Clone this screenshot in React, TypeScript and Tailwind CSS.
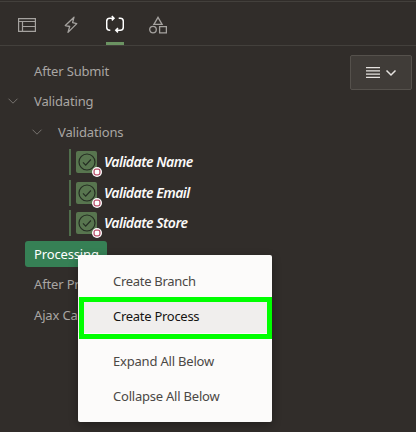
import React from "react";

const Chevron = ({ className }: { className: string }) => (
  <svg width="12" height="8" viewBox="0 0 12 8" fill="none" stroke="currentColor" className={className}>
    <path d="M1.5 1.7 6 6.2l4.5-4.5" />
  </svg>
);

const RegionIcon = () => (
  <svg width="18" height="14" viewBox="0 0 18 14" fill="none" stroke="currentColor" strokeWidth="1.2">
    <path d="M.6.6h16.8v12.8H.6zM.5 3.5h17M4.5 3.5v10M4.5 8.5h13" />
  </svg>
);

const BoltIcon = () => (
  <svg width="14" height="18" viewBox="0 0 14 18" fill="none" stroke="currentColor" strokeWidth="1.3" strokeLinejoin="round">
    <path d="M10 1.2 1.3 9.5l4.4 1L4 16.4l8.8-8.8-4.2-1z" />
  </svg>
);

const CycleIcon = () => (
  <svg width="18" height="18" viewBox="0 0 18 18" fill="none" stroke="currentColor" strokeWidth="1.5">
    <path d="M4.3 15.2h-.6c-2 0-3-1-3-3V6.2c0-2 1-3 3-3h4.6M5.8 1 8 3.2 5.8 5.4" />
    <path d="M12.7 3.2h1.6c2 0 3 1 3 3v6c0 2-1 3-3 3H9.8M12 13l-2.2 2.2L12 17.4" />
  </svg>
);

const ShapesIcon = () => (
  <svg width="18" height="18" viewBox="0 0 18 18" fill="none" stroke="currentColor" strokeWidth="1.3">
    <path d="M9 1.3 13.1 8.4H4.9zM10.6 10.6h6.8v6.2h-6.8z" />
    <circle cx="4" cy="13.6" r="3.3" />
  </svg>
);

const Validation = ({ label, spacing }: { label: string; spacing: string }) => (
  <div className="flex h-[30.5px] items-center pl-[69px]">
    <span className="h-[26px] w-[2px] bg-[#506e4c]" />
    <span className="relative ml-[5px] flex h-[22px] w-[21px] items-center justify-center rounded-[2px] bg-[#58754f]">
      <svg width="18" height="18" viewBox="0 0 18 18" fill="none" stroke="#252d23" strokeWidth="1.2">
        <circle cx="9" cy="9" r="8" />
        <path d="m5 9.3 2.7 2.8 5.2-5.6" />
      </svg>
      <svg className="absolute top-[16px] left-[16px]" width="10" height="10" viewBox="0 0 10 10">
        <circle cx="5" cy="5" r="5" fill="#fff" />
        <rect x="2.1" y="2.1" width="5.8" height="5.8" rx="1.8" fill="#fff" stroke="#b9526c" strokeWidth="1.3" />
      </svg>
    </span>
    <span className={`ml-[7px] text-[14px] font-semibold text-[#fbf9f8] italic ${spacing}`}>{label}</span>
  </div>
);

const MenuItem = ({ label, className }: { label: string; className: string }) => (
  <div className={`flex h-[35px] items-center pl-[35px] ${className}`}>{label}</div>
);

export default function App() {
  return (
    <div className="relative h-[432px] w-[416px] overflow-hidden bg-[#312d2a] font-['Noto_Sans','Open_Sans',sans-serif] text-[13px] leading-[18px] whitespace-nowrap text-[#a9a6a3]">
      <div className="h-px" />
      <header className="flex h-[45px] items-start border-y border-[#43403c] pl-[18px] text-[#a5a29f]">
        <div className="mt-[16px] w-[46px]"><RegionIcon /></div>
        <div className="mt-[14px] w-[42px]"><BoltIcon /></div>
        <div className="flex h-[43px] w-[43px] flex-col justify-between pt-[13px] text-white">
          <CycleIcon />
          <span className="h-[3px] w-[18px] bg-[#6b9362]" />
        </div>
        <div className="mt-[14px]"><ShapesIcon /></div>
      </header>
      <div className="flex justify-between">
        <div className="pt-[10px]">
          <div className="flex h-[30px] items-center pl-[34px] tracking-[-0.15px]">After Submit</div>
          <div className="flex h-[30.5px] items-center pl-[7px]">
            <Chevron className="mr-[15px] text-[#77736f]" />
            <span className="tracking-[-0.15px]">Validating</span>
          </div>
          <div className="flex h-[30.5px] items-center pl-[31px]">
            <Chevron className="mr-[15px] text-[#77736f]" />
            <span className="tracking-[-0.15px]">Validations</span>
          </div>
          <Validation label="Validate Name" spacing="tracking-[-0.5px]" />
          <Validation label="Validate Email" spacing="tracking-[-0.5px]" />
          <Validation label="Validate Store" spacing="tracking-[-0.5px]" />
          <div className="flex h-[30.5px] items-center pl-[25px]">
            <span className="flex h-[26px] w-[82px] items-center rounded-[3px] bg-[#368055] pl-[9px] tracking-[-0.15px] text-white">Processing</span>
          </div>
          <div className="flex h-[30.5px] items-center pl-[34px] tracking-[-0.15px]">After Processing</div>
          <div className="flex h-[30.5px] items-center pl-[34px] tracking-[-0.15px]">Ajax Callback</div>
        </div>
        <div className="mt-[9px] mr-[4px] flex h-[35px] w-[62px] items-center justify-center gap-[5px] rounded-[2px] border border-[#55514c] bg-[#403c38] text-[#e6e3e0]">
          <svg width="14" height="11" viewBox="0 0 14 11" stroke="currentColor" strokeWidth="1.25">
            <path d="M0 .6h14M0 3.9h14M0 7.1h14M0 10.4h14" />
          </svg>
          <svg width="12" height="8" viewBox="0 0 12 8" fill="none" stroke="currentColor" strokeWidth="1.5">
            <path d="M1.5 1.5 6 6l4.5-4.5" />
          </svg>
        </div>
      </div>
      <div className="absolute top-[255px] left-[78px] h-[167px] w-[194px] rounded-[2px] bg-[#fcfbfa] pt-[8px] text-[#4b4845] shadow-[0_3px_10px_rgba(0,0,0,0.3)]">
        <MenuItem label="Create Branch" className="tracking-[-0.3px]" />
        <MenuItem label="Create Process" className="bg-[#f0eeed] tracking-[-0.28px] text-[#161513]" />
        <MenuItem label="Expand All Below" className="mt-[10px] tracking-[-0.2px]" />
        <MenuItem label="Collapse All Below" className="tracking-[-0.22px]" />
      </div>
      <div className="absolute top-[297px] left-[79px] h-[42px] w-[193px] border-[5px] border-[#00ff00] bg-[#f0eeed] mix-blend-normal [background:none]" />
    </div>
  );
}
